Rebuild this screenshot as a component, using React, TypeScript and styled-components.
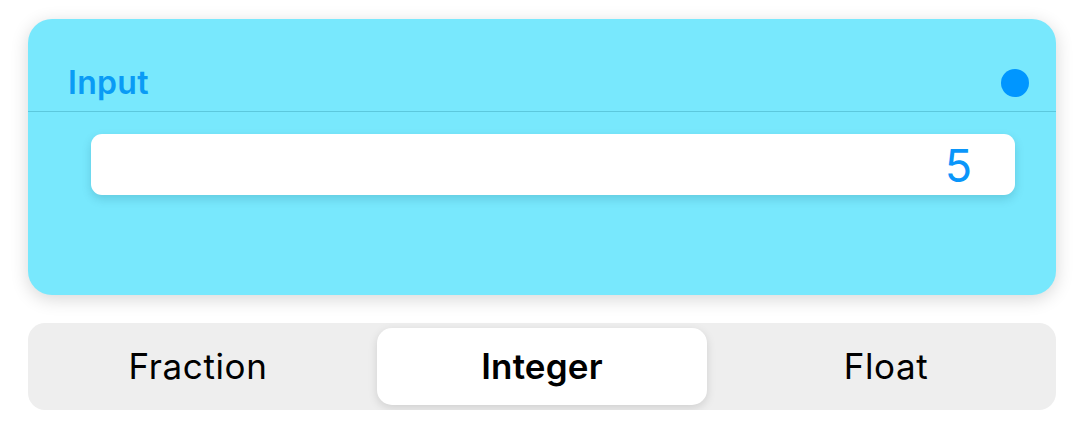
import React from "react";
import styled, { createGlobalStyle } from "styled-components";

const Global = createGlobalStyle`
  html, body { margin: 0; padding: 0; background: #ffffff; }
  body { font-family: Inter, "Noto Sans", sans-serif; }
`;

const Page = styled.div`
  width: 1084px;
  box-sizing: border-box;
  padding: 19px 28px 0 28px;
  display: flex;
  flex-direction: column;
  gap: 28px;
`;

const Card = styled.section`
  height: 276px;
  box-sizing: border-box;
  background: #78e8fd;
  border-radius: 24px;
  box-shadow: 0 4px 18px rgba(0, 0, 0, 0.16);
  display: flex;
  flex-direction: column;
`;

const Header = styled.header`
  height: 93px;
  box-sizing: border-box;
  padding: 36px 27px 1px 40px;
  display: flex;
  align-items: center;
  justify-content: space-between;
  border-bottom: 1px solid #5cc8dd;
`;

const Title = styled.h2`
  margin: 0;
  font-size: 32px;
  line-height: 40px;
  font-weight: 600;
  color: #0a9bf5;
  letter-spacing: 0.3px;
`;

const Dot = styled.span`
  width: 28px;
  height: 28px;
  border-radius: 50%;
  background: #0096ff;
`;

const Body = styled.div`
  padding: 22px 41px 0 63px;
`;

const Field = styled.div`
  height: 61px;
  background: #ffffff;
  border-radius: 11px;
  box-shadow: 0 4px 10px rgba(0, 70, 90, 0.18);
  display: flex;
  align-items: center;
  justify-content: flex-end;
  padding-right: 43px;
`;

const Value = styled.span`
  font-size: 45px;
  font-weight: 400;
  color: #0a96fa;
  line-height: 1;
  padding-top: 2px;
`;

const Segmented = styled.div`
  height: 87px;
  box-sizing: border-box;
  background: #eeeeee;
  border-radius: 17px;
  padding: 5px;
  display: grid;
  grid-template-columns: repeat(3, 1fr);
  column-gap: 14px;
`;

const Segment = styled.button<{ $active?: boolean }>`
  border: none;
  margin: 0;
  font-family: Inter, "Noto Sans", sans-serif;
  font-size: 35px;
  font-weight: ${(p) => (p.$active ? 600 : 400)};
  letter-spacing: ${(p) => (p.$active ? "0.2px" : "0.6px")};
  color: #000000;
  border-radius: 15px;
  background: ${(p) => (p.$active ? "#ffffff" : "transparent")};
  box-shadow: ${(p) => (p.$active ? "0 3px 10px rgba(0,0,0,0.13)" : "none")};
  display: flex;
  align-items: center;
  justify-content: center;
  padding: 0 0 2px 0;
`;

export default function App() {
  const options = ["Fraction", "Integer", "Float"];
  const active = "Integer";
  return (
    <>
      <Global />
      <Page>
        <Card>
          <Header>
            <Title>Input</Title>
            <Dot />
          </Header>
          <Body>
            <Field>
              <Value>5</Value>
            </Field>
          </Body>
        </Card>
        <Segmented>
          {options.map((o) => (
            <Segment key={o} $active={o === active}>
              {o}
            </Segment>
          ))}
        </Segmented>
      </Page>
    </>
  );
}
